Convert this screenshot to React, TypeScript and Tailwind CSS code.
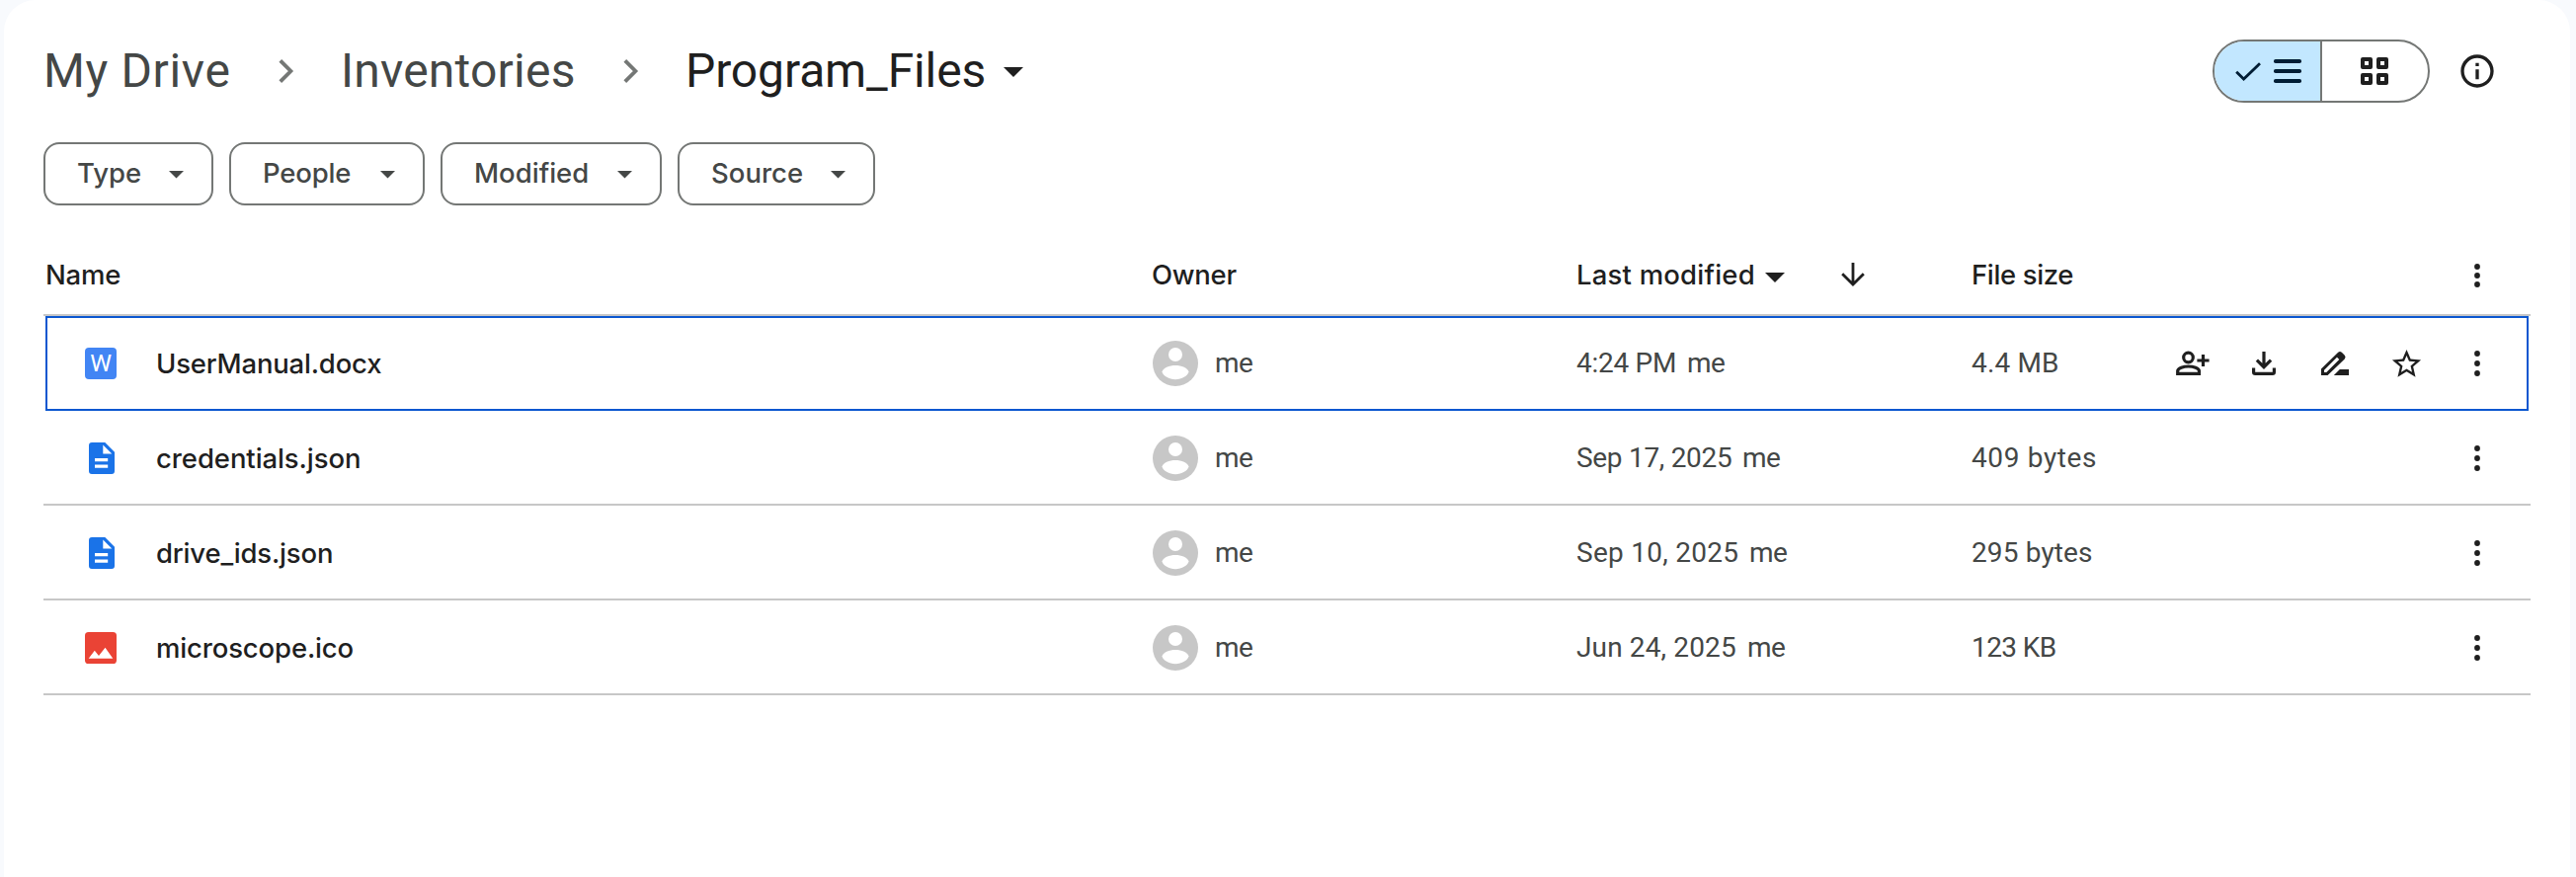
import type { ReactNode } from "react";

type FileKind = "word" | "doc" | "image";

interface FileRow {
  name: string;
  tracking: string;
  kind: FileKind;
  modified: string;
  modifiedTracking: string;
  size: string;
  sizeTracking: string;
  selected?: boolean;
}

const files: FileRow[] = [
  { name: "UserManual.docx", tracking: "tracking-[-0.2px]", kind: "word", modified: "4:24 PM", modifiedTracking: "w-[112px] tracking-[-0.27px]", size: "4.4 MB", sizeTracking: "tracking-[0.15px]", selected: true },
  { name: "credentials.json", tracking: "tracking-[-0.08px]", kind: "doc", modified: "Sep 17, 2025", modifiedTracking: "w-[168px] tracking-[-0.3px]", size: "409 bytes", sizeTracking: "tracking-[0.63px]" },
  { name: "drive_ids.json", tracking: "tracking-[-0.18px]", kind: "doc", modified: "Sep 10, 2025", modifiedTracking: "w-[175px] tracking-[0.28px]", size: "295 bytes", sizeTracking: "tracking-[0.13px]" },
  { name: "microscope.ico", tracking: "tracking-[-0.15px]", kind: "image", modified: "Jun 24, 2025", modifiedTracking: "w-[173px] tracking-[0.14px]", size: "123 KB", sizeTracking: "tracking-[-0.6px]" },
];

const chips = [
  { label: "Type", width: "w-[172px]", tracking: "" },
  { label: "People", width: "w-[198px]", tracking: "tracking-[-0.2px]" },
  { label: "Modified", width: "w-[224px]", tracking: "" },
  { label: "Source", width: "w-[200px]", tracking: "" },
];

function Caret({ className }: { className: string }) {
  return (
    <svg viewBox="0 0 20 10" preserveAspectRatio="none" className={className} fill="currentColor">
      <path d="M0 0h20L10 10z" />
    </svg>
  );
}

function Chevron() {
  return (
    <svg viewBox="0 0 40 40" className="h-10 w-10 shrink-0 text-[#747775]" fill="none" stroke="currentColor" strokeWidth="3.8">
      <path d="M14.8 9.4 25.4 20 14.8 30.6" />
    </svg>
  );
}

function MoreIcon({ gap }: { gap: 9 | 10 }) {
  return (
    <svg viewBox="0 0 40 40" className="h-10 w-10" fill="currentColor">
      <circle cx="20" cy={20 - gap} r="2.9" />
      <circle cx="20" cy="20" r="2.9" />
      <circle cx="20" cy={20 + gap} r="2.9" />
    </svg>
  );
}

function IconBox({ children }: { children: ReactNode }) {
  return <button className="flex h-10 w-[72px] items-center justify-center">{children}</button>;
}

function RowActions() {
  return (
    <>
      <IconBox>
        <svg viewBox="0 0 40 40" className="h-10 w-10" fill="none" stroke="currentColor" strokeWidth="3.2">
          <circle cx="15.5" cy="14" r="4.8" />
          <path d="M4.7 30.4v-2.6c0-2.8 6-4.8 10.9-4.8s10.900 2 10.900 4.800v2.600z" />
          <path d="M30.500 11v12M24.400 17H36.600" />
        </svg>
      </IconBox>
      <IconBox>
        <svg viewBox="0 0 40 40" className="h-10 w-10" fill="none" stroke="currentColor" strokeWidth="3.2">
          <path d="M20 8v15.5M12.900 16.600 20 23.700l7.100-7.100M9.600 24.600v4.200q0 1.600 1.600 1.600h17.600q1.600 0 1.600-1.600v-4.200" />
        </svg>
      </IconBox>
      <IconBox>
        <svg viewBox="0 0 40 40" className="h-10 w-10" fill="currentColor" fillRule="evenodd">
          <path d="M6 32v-6.4L23.2 8.800q1.800-1.600 3.600 0l3 3q1.600 1.800 0 3.600L12.600 32zM9 29h2.300l13-13-2.300-2.300-13 13z" />
          <path d="M18.800 32l6-6H34v6z" />
        </svg>
      </IconBox>
      <IconBox>
        <svg viewBox="0 0 24 24" className="h-[35px] w-[35px]" fill="currentColor">
          <path d="M22 9.24l-7.19-.62L12 2 9.19 8.63 2 9.24l5.46 4.73L5.82 21 12 17.27 18.18 21l-1.63-7.03L22 9.24zM12 15.4l-3.76 2.27 1-4.28-3.32-2.88 4.38-.38L12 6.1l1.71 4.04 4.38.38-3.32 2.88 1 4.28L12 15.4z" />
        </svg>
      </IconBox>
    </>
  );
}

function FileIcon({ kind }: { kind: FileKind }) {
  if (kind === "word") {
    return (
      <span className="flex h-8 w-8 items-center justify-center rounded-[4px] bg-[#4285f4] font-['Roboto',sans-serif] text-[24.5px] leading-8 font-normal text-white">
        W
      </span>
    );
  }
  if (kind === "doc") {
    return (
      <svg viewBox="0 0 32 32" className="h-8 w-8" fillRule="evenodd">
        <path fill="#1a73e8" d="M7 0h13.3L30 9.7V29a3 3 0 0 1-3 3H7a3 3 0 0 1-3-3V3a3 3 0 0 1 3-3zM18.300 2.600v9h9zM10 16v3.300h13.200V16zM10 22.400v3.300h13.200v-3.300z" />
      </svg>
    );
  }
  return (
    <svg viewBox="0 0 32 32" className="h-8 w-8">
      <rect width="32" height="32" rx="3.6" fill="#ea4335" />
      <path fill="#fff" d="M3.7 26.8 9.8 18.8 14 24l6.500-8.200 7.800 11z" />
    </svg>
  );
}

function Avatar() {
  return (
    <svg viewBox="0 0 46 46" className="h-[46px] w-[46px]">
      <circle cx="23" cy="23" r="23" fill="#c7c7c7" />
      <circle cx="23" cy="14" r="7" fill="#fff" />
      <path fill="#fff" d="M9.5 31.6C10 27.6 17 25 23 25s13 2.6 13.5 6.6C35.5 35.600 29.500 39.200 23 39.200S10.500 35.600 9.500 31.600z" />
    </svg>
  );
}

export default function App() {
  return (
    <div className="h-[888px] w-[2608px] overflow-hidden bg-[#f8fafd] pl-1 font-['Inter',sans-serif] text-[#1f1f1f]">
      <main className="flex h-[960px] w-[2598px] flex-col rounded-[32px] bg-white pl-10">
        <header className="mt-10 flex h-16 w-[2518px] items-center">
          <nav className="flex h-16 items-center font-['Roboto',sans-serif] text-[48px] leading-[64px] whitespace-nowrap text-[#444746]">
            <span className="w-[225px] tracking-[0.65px]">My Drive</span>
            <Chevron />
            <span className="ml-[36px] w-[273px] tracking-[0.22px]">Inventories</span>
            <Chevron />
            <span className="ml-[36px] w-[318px] tracking-[-0.12px] text-[#1f1f1f]">Program_Files</span>
            <Caret className="mt-[2px] ml-[4px] h-[10px] w-[20px] text-[#1f1f1f]" />
          </nav>
          <div className="ml-auto flex items-center">
            <div className="flex h-16 w-[220px] overflow-hidden rounded-full border-2 border-[#747775]">
              <div className="flex w-[109px] items-center border-r-2 border-[#747775] bg-[#c2e7ff] pl-[20px] text-[#001d35]">
                <svg viewBox="0 0 28 24" className="h-6 w-7" fill="none" stroke="currentColor" strokeWidth="2.8">
                  <path d="M2.2 12.7 9.6 20 26 4.2" />
                </svg>
                <svg viewBox="0 0 28 24" className="ml-3 h-6 w-7" fill="currentColor">
                  <rect width="28" height="4" rx="1.8" />
                  <rect y="10" width="28" height="4" rx="1.8" />
                  <rect y="20" width="28" height="4" rx="1.8" />
                </svg>
              </div>
              <div className="flex flex-1 items-center justify-center pr-px">
                <svg viewBox="0 0 28 28" className="h-7 w-7" fill="none" stroke="currentColor" strokeWidth="4" strokeLinejoin="round">
                  <rect x="2" y="2" width="8" height="8" />
                  <rect x="18" y="2" width="8" height="8" />
                  <rect x="2" y="18" width="8" height="8" />
                  <rect x="18" y="18" width="8" height="8" />
                </svg>
              </div>
            </div>
            <svg viewBox="0 0 24 24" className="mr-[34px] ml-[28px] h-10 w-10" fill="currentColor">
              <path d="M11 7h2v2h-2zm0 4h2v6h-2zm1-9C6.480 2 2 6.480 2 12s4.480 10 10 10 10-4.480 10-10S17.520 2 12 2zm0 18c-4.410 0-8-3.590-8-8s3.590-8 8-8 8 3.590 8 8-3.590 8-8 8z" />
            </svg>
          </div>
        </header>

        <div className="mt-10 flex h-16 gap-4 text-[#444746]">
          {chips.map((chip) => (
            <button
              key={chip.label}
              className={`flex h-16 shrink-0 items-center justify-between rounded-[16px] border-2 border-[#747775] pr-[28px] pb-px pl-[32px] text-[27.5px] font-medium ${chip.width}`}
            >
              <span className={chip.tracking}>{chip.label}</span>
              <Caret className="mt-[3px] h-[7.5px] w-[15px]" />
            </button>
          ))}
        </div>

        <section className="mt-[30px] w-[2518px]">
          <div className="flex h-[82px] items-center border-b-2 border-[#c7c7c7] pt-[2px] text-[27.5px] font-medium whitespace-nowrap">
            <span className="w-[1122px] pl-[2px] tracking-[-0.2px]">Name</span>
            <span className="w-[430px] tracking-[-0.3px]">Owner</span>
            <span className="w-[191px] tracking-[0.2px]">Last modified</span>
            <Caret className="mt-[3px] h-[10px] w-[20px]" />
            <svg viewBox="0 0 24 24" className="mb-[3px] ml-[57px] h-6 w-6" fill="none" stroke="currentColor" strokeWidth="2.8">
              <path d="M12 0v22M1.2 11.2 12 22l10.800-10.800" />
            </svg>
            <span className="ml-[108px] tracking-[-0.37px]">File size</span>
            <span className="mr-[18px] ml-auto">
              <IconBox>
                <MoreIcon gap={9} />
              </IconBox>
            </span>
          </div>

          {files.map((file) => (
            <div
              key={file.name}
              className={`flex h-24 items-center ${
                file.selected ? "mr-[2px] ml-[2px] border-2 border-[#0b57d0] pl-[38px]" : "border-b-2 border-[#c7c7c7] pl-[42px]"
              }`}
            >
              <div className={`flex w-full items-center whitespace-nowrap ${file.selected ? "" : "pt-[2px]"}`}>
                <FileIcon kind={file.kind} />
                <span className={`ml-10 w-[1009px] pt-px text-[27.5px] font-medium ${file.tracking}`}>{file.name}</span>
                <div className="flex w-[429px] items-center font-['Roboto',sans-serif] text-[28px] text-[#444746]">
                  <Avatar />
                  <span className="ml-[17px] tracking-[-0.55px]">me</span>
                </div>
                <div className="flex w-[400px] font-['Roboto',sans-serif] text-[28px] text-[#444746]">
                  <span className={file.modifiedTracking}>{file.modified}</span>
                  <span className="tracking-[-0.55px]">me</span>
                </div>
                <span className={`font-['Roboto',sans-serif] text-[28px] text-[#444746] ${file.sizeTracking}`}>{file.size}</span>
                <div className={`ml-auto flex ${file.selected ? "mr-[14px]" : "mr-[18px]"}`}>
                  {file.selected && <RowActions />}
                  <IconBox>
                    <MoreIcon gap={10} />
                  </IconBox>
                </div>
              </div>
            </div>
          ))}
        </section>
      </main>
    </div>
  );
}
